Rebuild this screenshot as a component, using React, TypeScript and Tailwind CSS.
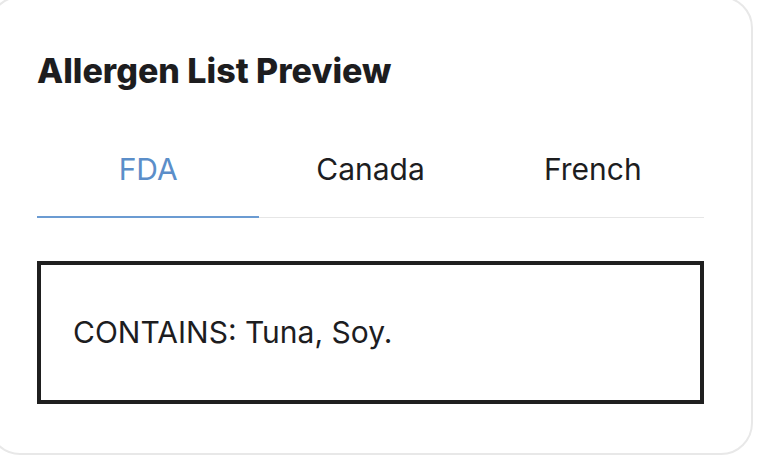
import { useState } from "react";

const tabs = ["FDA", "Canada", "French"];

const previews: Record<string, string> = {
  FDA: "CONTAINS: Tuna, Soy.",
  Canada: "Contains: Tuna, Soy.",
  French: "Contient : Thon, Soja.",
};

export default function App() {
  const [active, setActive] = useState("FDA");

  return (
    <div className="min-h-[464px] w-[760px] overflow-hidden bg-white font-['Inter','Noto_Sans',sans-serif] text-[#1d1d1f]">
      {/* card is cropped at the left and top edges of the shot */}
      <div className="ml-[-12px] mt-[-4px] w-[765px] rounded-[32px] border-2 border-[#e8e8e8] bg-white px-[47px] pb-[49px] pt-[56px]">
        <h2 className="text-[34px] font-extrabold leading-none">Allergen List Preview</h2>

        <div className="mt-[34px] flex border-b border-[#e6e6e6]">
          {tabs.map((tab) => (
            <button
              key={tab}
              onClick={() => setActive(tab)}
              className={
                active === tab
                  ? "-mb-px flex-1 border-b-2 border-[#6b9bd2] pb-[32px] pt-[32px] text-[30px] leading-none text-[#5b8ec9]"
                  : "-mb-px flex-1 border-b-2 border-transparent pb-[32px] pt-[32px] text-[30px] leading-none text-[#1d1d1f]"
              }
            >
              {tab}
            </button>
          ))}
        </div>

        <div className="mt-[43px] border-4 border-[#1f1f1f] px-[32px] pb-[53px] pt-[52px]">
          <p className="text-[30px] leading-none">{previews[active]}</p>
        </div>
      </div>
    </div>
  );
}
